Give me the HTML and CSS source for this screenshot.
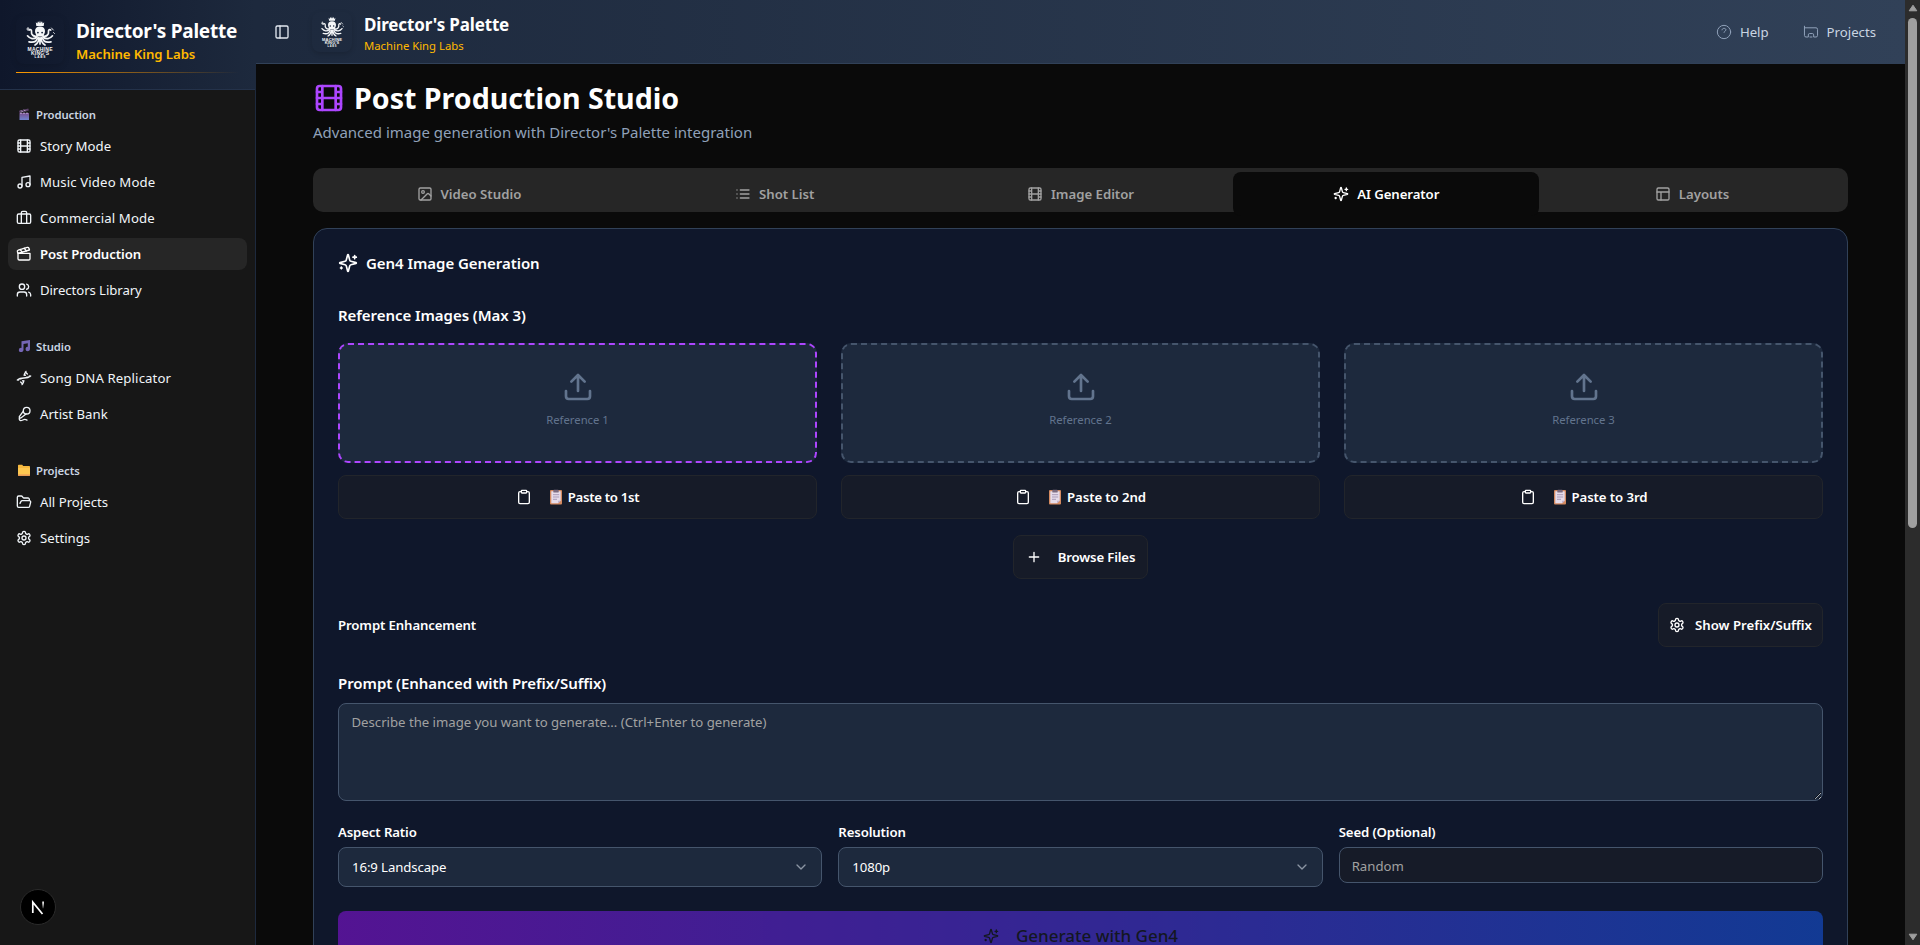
FILE: index.html
```html
<!DOCTYPE html>
<html lang="en">
<head>
<meta charset="utf-8">
<title>Director's Palette</title>
<link rel="stylesheet" href="styles.css">
</head>
<body>
<svg class="sprite" aria-hidden="true">
  <symbol id="panel" viewBox="0 0 24 24"><rect width="18" height="18" x="3" y="3" rx="2"/><path d="M9 3v18"/></symbol>
  <symbol id="film" viewBox="0 0 24 24"><rect width="18" height="18" x="3" y="3" rx="2"/><path d="M7 3v18M3 7.5h4M3 12h18M3 16.5h4M17 3v18M17 7.5h4M17 16.5h4"/></symbol>
  <symbol id="music" viewBox="0 0 24 24"><path d="M9 18V5l12-2v13"/><circle cx="6" cy="18" r="3"/><circle cx="18" cy="16" r="3"/></symbol>
  <symbol id="briefcase" viewBox="0 0 24 24"><path d="M16 20V4a2 2 0 0 0-2-2h-4a2 2 0 0 0-2 2v16"/><rect width="20" height="14" x="2" y="6" rx="2"/></symbol>
  <symbol id="clapper" viewBox="0 0 24 24"><path d="M20.2 6 3 11l-.9-2.4c-.3-1.1.3-2.2 1.3-2.5l13.5-4c1.1-.3 2.2.3 2.5 1.3Z"/><path d="m6.2 5.3 3.1 3.9M12.4 3.4l3.1 4M3 11h18v8a2 2 0 0 1-2 2H5a2 2 0 0 1-2-2Z"/></symbol>
  <symbol id="users" viewBox="0 0 24 24"><path d="M16 21v-2a4 4 0 0 0-4-4H6a4 4 0 0 0-4 4v2"/><circle cx="9" cy="7" r="4"/><path d="M22 21v-2a4 4 0 0 0-3-3.87M16 3.13a4 4 0 0 1 0 7.75"/></symbol>
  <symbol id="dna" viewBox="0 0 24 24"><path d="m10 16 1.5 1.5M14 8l-1.500-1.500M15 2c-1.798 1.998-2.518 3.995-2.807 5.993M16.500 10.500l1 1M17 6l-2.891-2.891M2 15c6.667-6 13.333 0 20-6M20 9l.891.891M3.109 14.109 4 15M6.500 12.500l1 1M7 18l2.891 2.891M9 22c1.798-1.998 2.518-3.995 2.807-5.993"/></symbol>
  <symbol id="mic" viewBox="0 0 24 24"><path d="m11 7.601-5.994 8.190a1 1 0 0 0 .1 1.298l.817.818a1 1 0 0 0 1.314.087L15.090 12"/><path d="M16.500 21.174C15.500 20.500 14.372 20 13 20c-2.058 0-3.928 2.356-6 2-2.072-.356-2.775-3.369-1.500-4.500"/><circle cx="16" cy="7" r="5"/></symbol>
  <symbol id="folder" viewBox="0 0 24 24"><path d="m6 14 1.500-2.900A2 2 0 0 1 9.240 10H20a2 2 0 0 1 1.940 2.500l-1.540 6a2 2 0 0 1-1.950 1.500H4a2 2 0 0 1-2-2V5a2 2 0 0 1 2-2h3.900a2 2 0 0 1 1.690.900l.810 1.200a2 2 0 0 0 1.670.900H18a2 2 0 0 1 2 2v2"/></symbol>
  <symbol id="gear" viewBox="0 0 24 24"><path d="M12.220 2h-.440a2 2 0 0 0-2 2v.180a2 2 0 0 1-1 1.730l-.430.250a2 2 0 0 1-2 0l-.150-.080a2 2 0 0 0-2.730.730l-.220.380a2 2 0 0 0 .730 2.730l.150.100a2 2 0 0 1 1 1.720v.510a2 2 0 0 1-1 1.740l-.150.090a2 2 0 0 0-.730 2.730l.220.380a2 2 0 0 0 2.730.730l.150-.080a2 2 0 0 1 2 0l.430.250a2 2 0 0 1 1 1.730V20a2 2 0 0 0 2 2h.440a2 2 0 0 0 2-2v-.180a2 2 0 0 1 1-1.730l.430-.250a2 2 0 0 1 2 0l.150.080a2 2 0 0 0 2.730-.730l.220-.390a2 2 0 0 0-.730-2.730l-.150-.080a2 2 0 0 1-1-1.740v-.500a2 2 0 0 1 1-1.740l.150-.090a2 2 0 0 0 .730-2.730l-.220-.380a2 2 0 0 0-2.730-.730l-.150.080a2 2 0 0 1-2 0l-.430-.250a2 2 0 0 1-1-1.730V4a2 2 0 0 0-2-2z"/><circle cx="12" cy="12" r="3"/></symbol>
  <symbol id="image" viewBox="0 0 24 24"><rect width="18" height="18" x="3" y="3" rx="2"/><circle cx="9" cy="9" r="2"/><path d="m21 15-3.086-3.086a2 2 0 0 0-2.828 0L6 21"/></symbol>
  <symbol id="list" viewBox="0 0 24 24"><path d="M3 12h.010M3 18h.010M3 6h.010M8 12h13M8 18h13M8 6h13"/></symbol>
  <symbol id="sparkles" viewBox="0 0 24 24"><path d="M9.937 15.500A2 2 0 0 0 8.500 14.063l-6.135-1.582a.5.5 0 0 1 0-.962L8.500 9.936A2 2 0 0 0 9.937 8.500l1.582-6.135a.5.5 0 0 1 .963 0L14.063 8.500A2 2 0 0 0 15.500 9.937l6.135 1.581a.5.5 0 0 1 0 .964L15.500 14.063a2 2 0 0 0-1.437 1.437l-1.582 6.135a.5.5 0 0 1-.963 0z"/><path d="M20 3v4M22 5h-4M4 17v2M5 18H3"/></symbol>
  <symbol id="layout" viewBox="0 0 24 24"><rect width="18" height="18" x="3" y="3" rx="2"/><path d="M3 9h18M9 21V9"/></symbol>
  <symbol id="upload" viewBox="0 0 24 24"><path d="M21 15v4a2 2 0 0 1-2 2H5a2 2 0 0 1-2-2v-4M17 8l-5-5-5 5M12 3v12"/></symbol>
  <symbol id="clipboard" viewBox="0 0 24 24"><rect width="8" height="4" x="8" y="2" rx="1"/><path d="M16 4h2a2 2 0 0 1 2 2v14a2 2 0 0 1-2 2H6a2 2 0 0 1-2-2V6a2 2 0 0 1 2-2h2"/></symbol>
  <symbol id="plus" viewBox="0 0 24 24"><path d="M5 12h14M12 5v14"/></symbol>
  <symbol id="chevron" viewBox="0 0 24 24"><path d="m6 9 6 6 6-6"/></symbol>
  <symbol id="help" viewBox="0 0 24 24"><circle cx="12" cy="12" r="10"/><path d="M9.100 8.800c.2-1.500 1.400-2.300 2.900-2.300 1.700 0 2.900.9 2.900 2.300 0 1.900-2.900 2-2.900 3.700"/></symbol>
  <symbol id="drive" viewBox="0 0 24 24"><path d="M2.200 3.300v14a2.300 2.300 0 0 0 2.300 2.200H8v-3.200a2 2 0 0 1 2-2h4a2 2 0 0 1 2 2v3.200h3.500a2.300 2.300 0 0 0 2.300-2.200V8a2.300 2.300 0 0 0-2.300-2.300H2.200M10.500 19.500h3"/></symbol>
  <symbol id="note" viewBox="0 0 14 16"><rect x="1" y="1" width="12" height="14.500" rx="1" fill="#d48a60"/><path d="M2.300 2.300h9.400v9.500l-2.500 2.500H2.300z" fill="#e6dcea"/><path d="M11.700 11.800 9.200 14.300v-2.500z" fill="#bba9c6"/><rect x="4.300" y=".8" width="5.400" height="2.800" rx=".7" fill="#7b6b7f"/><path d="M4 5.700h6.200M4 8h6.200M4 10.300h4" stroke="#a99bb8" stroke-width="1"/></symbol>
  <symbol id="octopus" viewBox="0 0 40 40">
    <g transform="translate(0 -3)">
    <path fill="#f4f6f8" d="M15.800 5.300 17.300 6.600 18 4.200l1.300 1.900L20 3.500l.7 2.600L22 4.200l.7 2.400 1.500-1.300-.5 3.700h-7.400z"/>
    <path fill="#f4f6f8" d="M20 9.500c3.300 0 5 2.100 5 4.700 0 2.300-1.500 3.400-1.500 5.300h-7c0-1.900-1.500-3-1.500-5.300 0-2.600 1.700-4.700 5-4.700z"/>
    <g fill="none" stroke="#f4f6f8" stroke-width="1.700" stroke-linecap="round">
      <path d="M17 19c-3.500 1-6-1.500-5.500-4.500.2-1.800-1.300-2.500-2.200-1.500"/><path d="M23 19c3.500 1 6-1.500 5.500-4.500-.2-1.800 1.300-2.500 2.200-1.500"/>
      <path d="M17 20c-3 2.700-7 2-9.500-1.200"/><path d="M23 20c3 2.700 7 2 9.500-1.200"/>
      <path d="M17.500 21c-.8 3-3.500 5-8.500 3.800"/><path d="M22.500 21c.8 3 3.500 5 8.500 3.800"/>
      <path d="M18.800 20.500c.2 3-1 5.800-3.800 7.500M21.200 20.500c-.2 3 1 5.800 3.800 7.500M20 21v6"/>
      <path stroke-width=".9" d="M8 10.500v3M6.800 12h2.400M31.500 11l1.800 2M33.500 15.500l1 1"/>
    </g>
    <g fill="#18233a"><circle cx="17.900" cy="15.600" r=".9"/><circle cx="22.100" cy="15.600" r=".9"/></g>
    </g>
  </symbol>
</svg>

<div class="app">
  <aside class="sidebar">
    <header class="brand">
      <div class="brand-row">
        <div class="logo logo-lg"><svg viewBox="0 0 40 40"><use href="#octopus"/><g class="logo-text"><text x="20" y="31" textLength="25">MACHINE</text><text x="20" y="35.200" textLength="18">KING'S</text><text class="tiny" x="20" y="38.400" textLength="11">LABS</text></g></svg></div>
        <div><div class="brand-name">Director's Palette</div><div class="brand-sub">Machine King Labs</div></div>
      </div>
      <div class="brand-line"></div>
    </header>
    <nav class="group">
      <div class="group-label"><svg class="emoji" viewBox="0 0 12 12"><defs><linearGradient id="cg" x2="0" y2="1"><stop offset="0" stop-color="#7a4f8e"/><stop offset="1" stop-color="#7083cf"/></linearGradient></defs><path d="M1.500 5h9.500v7H1.500z" fill="url(#cg)"/><path d="M1 2.800 10.300.6l.5 2L1.500 4.900z" fill="#5a4068"/><path d="m3 2.400 1.500 1.500M6 1.700l1.500 1.500" stroke="#cbb8dc"/><path d="M2 5.200h9" stroke="#b8a5d2" stroke-dasharray="2 1"/></svg>Production</div>
      <a class="item"><svg class="i"><use href="#film"/></svg>Story Mode</a>
      <a class="item loose"><svg class="i"><use href="#music"/></svg>Music Video Mode</a>
      <a class="item loose"><svg class="i"><use href="#briefcase"/></svg>Commercial Mode</a>
      <a class="item current"><svg class="i"><use href="#clapper"/></svg>Post Production</a>
      <a class="item tight"><svg class="i"><use href="#users"/></svg>Directors Library</a>
    </nav>
    <nav class="group">
      <div class="group-label"><svg class="emoji" viewBox="0 0 12 12"><path d="M3.500 1.200 12 0v9.500H9.800V3.300L5.500 4v6.500H3.500z" fill="#7566b5"/><circle cx="3" cy="10" r="2.200" fill="#7566b5"/><circle cx="9.700" cy="9" r="2.200" fill="#7566b5"/></svg>Studio</div>
      <a class="item loose"><svg class="i"><use href="#dna"/></svg>Song DNA Replicator</a>
      <a class="item"><svg class="i"><use href="#mic"/></svg>Artist Bank</a>
    </nav>
    <nav class="group">
      <div class="group-label"><svg class="emoji" viewBox="0 0 12 12"><path d="M0 1.500Q0 .8.700.8h3.500l1 1.200h6q.8 0 .8.800V11q0 .8-.8.800H.8Q0 11.800 0 11z" fill="#f5b83f"/><path d="M0 4h12v6.800q0 1-.8 1H.8q-.8 0-.8-1z" fill="#fdc750"/><path d="M0 10.500h12v.5q0 .8-.8.800H.8Q0 11.800 0 11z" fill="#e8925a"/></svg>Projects</div>
      <a class="item"><svg class="i"><use href="#folder"/></svg>All Projects</a>
      <a class="item"><svg class="i"><use href="#gear"/></svg>Settings</a>
    </nav>
    <div class="dev-badge"><svg viewBox="0 0 34 34"><defs><linearGradient id="ng" x2="0" y2="1"><stop offset=".2" stop-color="#fff"/><stop offset="1" stop-color="#fff" stop-opacity=".1"/></linearGradient></defs><path d="M11.800 23V12.200L21.500 24" fill="none" stroke="#fff" stroke-width="1.700"/><path d="M21.300 11.500h1.600v7h-1.600z" fill="url(#ng)"/></svg></div>
  </aside>

  <div class="main">
    <header class="topbar">
      <svg class="i toggle"><use href="#panel"/></svg>
      <div class="logo logo-sm"><svg viewBox="0 0 40 40"><use href="#octopus"/><g class="logo-text"><text x="20" y="31" textLength="25">MACHINE</text><text x="20" y="35.200" textLength="18">KING'S</text><text class="tiny" x="20" y="38.400" textLength="11">LABS</text></g></svg></div>
      <div class="top-title"><div class="top-name">Director's Palette</div><div class="top-sub">Machine King Labs</div></div>
      <a class="top-link help"><svg class="i thin"><use href="#help"/></svg>Help</a>
      <a class="top-link projects"><svg class="i thin"><use href="#drive"/></svg>Projects</a>
    </header>
    <main class="content">
      <h1 class="title"><svg class="i title-icon"><use href="#film"/></svg><span>Post Production Studio</span></h1>
      <p class="subtitle">Advanced image generation with Director's Palette integration</p>
      <div class="tabs">
        <div class="tab"><svg class="i"><use href="#image"/></svg>Video Studio</div>
        <div class="tab"><svg class="i"><use href="#list"/></svg>Shot List</div>
        <div class="tab"><svg class="i"><use href="#film"/></svg>Image Editor</div>
        <div class="tab on"><svg class="i"><use href="#sparkles"/></svg>AI Generator</div>
        <div class="tab"><svg class="i"><use href="#layout"/></svg>Layouts</div>
      </div>
      <section class="card">
        <h2 class="card-title"><svg class="i"><use href="#sparkles"/></svg>Gen4 Image Generation</h2>
        <h3 class="field-title refs-title">Reference Images (Max 3)</h3>
        <div class="refs">
          <div class="ref first"><svg class="i"><use href="#upload"/></svg>Reference 1</div>
          <div class="ref"><svg class="i"><use href="#upload"/></svg>Reference 2</div>
          <div class="ref"><svg class="i"><use href="#upload"/></svg>Reference 3</div>
          <button class="btn paste first-paste"><svg class="i"><use href="#clipboard"/></svg><svg class="note"><use href="#note"/></svg>Paste to 1st</button>
          <button class="btn paste"><svg class="i"><use href="#clipboard"/></svg><svg class="note"><use href="#note"/></svg>Paste to 2nd</button>
          <button class="btn paste"><svg class="i"><use href="#clipboard"/></svg><svg class="note"><use href="#note"/></svg>Paste to 3rd</button>
        </div>
        <button class="btn browse"><svg class="i"><use href="#plus"/></svg>Browse Files</button>
        <div class="enhance"><span class="label">Prompt Enhancement</span><button class="btn prefix"><svg class="i"><use href="#gear"/></svg>Show Prefix/Suffix</button></div>
        <h3 class="field-title">Prompt (Enhanced with Prefix/Suffix)</h3>
        <textarea class="prompt" placeholder="Describe the image you want to generate... (Ctrl+Enter to generate)"></textarea>
        <div class="options">
          <div><div class="label">Aspect Ratio</div><div class="select ratio"><span>16:9 Landscape</span><svg class="i"><use href="#chevron"/></svg></div></div>
          <div><div class="label">Resolution</div><div class="select"><span>1080p</span><svg class="i"><use href="#chevron"/></svg></div></div>
          <div><div class="label">Seed (Optional)</div><input class="seed" placeholder="Random"></div>
        </div>
        <button class="generate"><svg class="i"><use href="#sparkles"/></svg>Generate with Gen4</button>
      </section>
    </main>
  </div>

  <div class="scrollbar">
    <svg class="arrow" viewBox="0 0 10 8"><path d="M5 1.200 8.800 6.800H1.200z"/></svg>
    <div class="thumb"></div>
    <svg class="arrow" viewBox="0 0 10 8"><path d="M5 6.800 8.800 1.200H1.200z"/></svg>
  </div>
</div>
</body>
</html>
```
FILE: styles.css
```css
* { box-sizing: border-box; margin: 0; }
body { background: #0a0a0a; color: #fff; font-family: "Noto Sans", "Open Sans", sans-serif; overflow: hidden; }
button, input, textarea { font-family: inherit; }
.sprite { position: absolute; width: 0; height: 0; }
.i { width: 16px; height: 16px; flex: none; fill: none; stroke: currentColor; stroke-width: 2; stroke-linecap: round; stroke-linejoin: round; }
.thin { stroke-width: 1.5; }
.app { display: flex; height: 945px; overflow: hidden; }

.sidebar { position: relative; flex: none; width: 256px; background: #171717; border-right: 1px solid #1d293d; }
.brand { height: 90px; padding: 16px; background: linear-gradient(90deg, #0f172b, #1d293d); border-bottom: 1px solid #24324a; }
.brand-row { display: flex; align-items: center; gap: 12px; height: 48px; }
.brand-row > div:last-child { padding-top: 2px; }
.logo { flex: none; }
.logo svg { display: block; width: 100%; height: 100%; overflow: visible; }
.logo-lg { width: 48px; height: 48px; padding: 4px; border-radius: 8px; box-shadow: 0 2px 6px rgba(0, 0, 0, .12); }
.logo-sm { width: 40px; height: 40px; padding: 4px 3px; border-radius: 8px; box-shadow: 0 2px 5px rgba(0, 0, 0, .15); }
.logo-text { fill: #f4f6f8; font: bold 5px "Liberation Sans", sans-serif; text-anchor: middle; }
.logo-text .tiny { font-size: 3.200px; }
.brand-name { font-size: 19px; line-height: 25px; font-weight: 700; letter-spacing: -.23px; white-space: nowrap; }
.brand-sub { font-size: 13.200px; line-height: 20px; font-weight: 600; letter-spacing: -.06px; color: #ffb900; white-space: nowrap; }
.brand-line { height: 1px; margin-top: 8px; background: linear-gradient(90deg, #fe9a00, transparent); }
.group { padding: 8px; color: #f1f5f9; }
.group-label { display: flex; align-items: center; height: 32px; padding-left: 10px; gap: 6px; font-size: 11.300px; font-weight: 600; letter-spacing: -.07px; color: #cad5e2; }
.emoji { width: 12px; height: 12px; }
.item { display: flex; align-items: center; gap: 8px; height: 32px; padding: 0 8px; margin-bottom: 4px; border-radius: 8px; font-size: 13.200px; white-space: nowrap; }
.item:last-child { margin-bottom: 0; }
.loose { letter-spacing: .12px; }
.tight { letter-spacing: -.08px; }
.group + .group { margin-top: 8px; }
.item.current { background: #262626; font-weight: 600; color: #fff; letter-spacing: -.07px; }
.dev-badge { position: absolute; left: 20px; bottom: 20px; width: 36px; height: 36px; border: 1px solid #2b2b2b; border-radius: 50%; background: #000; }

.main { flex: 1; min-width: 0; }
.topbar { display: flex; align-items: center; height: 64px; padding: 0 29px 0 18px; background: linear-gradient(90deg, #1d293d, #314158); border-bottom: 1px solid #314158; }
.toggle { margin-right: 22px; color: #e2e8f0; }
.top-title { margin-left: 12px; padding-top: 4px; flex: 1; }
.top-name { font-size: 17px; line-height: 24px; font-weight: 700; letter-spacing: -.15px; }
.top-sub { font-size: 11.300px; line-height: 18px; color: #ffb900; }
.top-link { display: flex; align-items: center; gap: 8px; font-size: 13.200px; color: #cad5e2; }
.top-link .i { color: #90a1b9; }
.projects { margin-left: 34px; }

.content { padding: 18px 57px 0; }
.title { display: flex; align-items: center; gap: 9px; height: 32px; font-size: 28.600px; line-height: 32px; font-weight: 700; }
.title-icon { width: 32px; height: 32px; color: #ad46ff; }
.subtitle { height: 24px; margin-top: 6px; font-size: 15px; line-height: 24px; color: #90a1b9; }
.tabs { display: grid; grid-template-columns: repeat(5, 1fr); height: 44px; margin-top: 24px; padding: 4px 3px 0; background: #262626; border-radius: 10px; }
.tab { display: flex; align-items: center; justify-content: center; gap: 8px; height: 44px; border-radius: 8px; font-size: 13.200px; font-weight: 600; color: #a1a1a1; }
.tab.on { background: #0a0a0a; color: #fff; letter-spacing: -.08px; }
.card { height: 760px; margin-top: 16px; padding: 24px; background: #0f172b; border: 1px solid #314158; border-radius: 14px; }
.card-title { display: flex; align-items: center; gap: 8px; height: 20px; font-size: 15px; font-weight: 600; letter-spacing: -.05px; }
.card-title .i { width: 20px; height: 20px; }
.field-title { font-size: 15px; line-height: 24px; font-weight: 600; letter-spacing: -.05px; }
.refs-title { margin-top: 30px; }
.refs { display: grid; grid-template-columns: repeat(3, 1fr); gap: 12px 24px; margin-top: 16px; }
.ref { display: flex; flex-direction: column; align-items: center; gap: 8px; height: 120px; padding-top: 26px; background: #1d293d; border: 2px dashed #45556c; border-radius: 10px; font-size: 11.300px; line-height: 17px; color: #62748e; }
.ref.first { border-color: #ad46ff; }
.ref .i { width: 32px; height: 32px; }
.btn { display: flex; align-items: center; justify-content: center; height: 44px; padding: 0; background: #161b28; border: 1px solid #22252b; border-radius: 8px; font-size: 13.200px; font-weight: 600; color: #fff; white-space: nowrap; }
.paste { letter-spacing: -.1px; }
.first-paste { letter-spacing: -.3px; }
.note { width: 14px; height: 16px; margin: 0 5px 0 17px; }
.browse { width: 135px; margin: 16px auto 0; gap: 16px; letter-spacing: -.15px; }
.enhance { display: flex; align-items: center; justify-content: space-between; margin-top: 24px; }
.label { font-size: 13.200px; line-height: 20px; font-weight: 600; letter-spacing: -.12px; }
.prefix { width: 165px; gap: 10px; }
.enhance + .field-title { margin-top: 24px; }
.prompt { display: block; width: 100%; height: 98px; margin-top: 8px; padding: 8px 12.500px; background: #1d293d; border: 1px solid #45556c; border-radius: 8px; font-size: 13.200px; line-height: 20px; letter-spacing: -.015px; resize: vertical; color: #fff; }
.prompt::placeholder, .seed::placeholder { color: #a1a1a1; opacity: 1; }
.options { display: grid; grid-template-columns: repeat(3, 1fr); gap: 16px; margin-top: 21px; }
.select, .seed { display: flex; align-items: center; justify-content: space-between; width: 100%; height: 40px; margin-top: 5px; padding: 0 12px 0 13px; background: #1d293d; border: 1px solid #45556c; border-radius: 8px; font-size: 13.200px; letter-spacing: -.1px; }
.select .i { color: #8b95a3; }
.seed { height: 36px; padding: 1px 12px 0; background: #161b28; color: #fff; letter-spacing: 0; }
.generate { display: flex; align-items: center; justify-content: center; gap: 17px; width: 100%; height: 49px; margin-top: 24px; padding: 0; border: 0; border-radius: 8px; background: linear-gradient(90deg, #9810fa, #155dfc); opacity: .5; font-size: 17px; line-height: 22px; font-weight: 500; color: #171717; }

.scrollbar { display: flex; flex-direction: column; align-items: center; flex: none; width: 15px; height: 945px; padding: 4px 0 4px; background: #2c2c2c; }
.arrow { flex: none; width: 10px; height: 8px; fill: #9f9f9f; stroke: #9f9f9f; stroke-linejoin: round; }
.thumb { flex: none; width: 9px; height: 510px; margin: 6px 0 auto; border-radius: 5px; background: #9f9f9f; }
```
